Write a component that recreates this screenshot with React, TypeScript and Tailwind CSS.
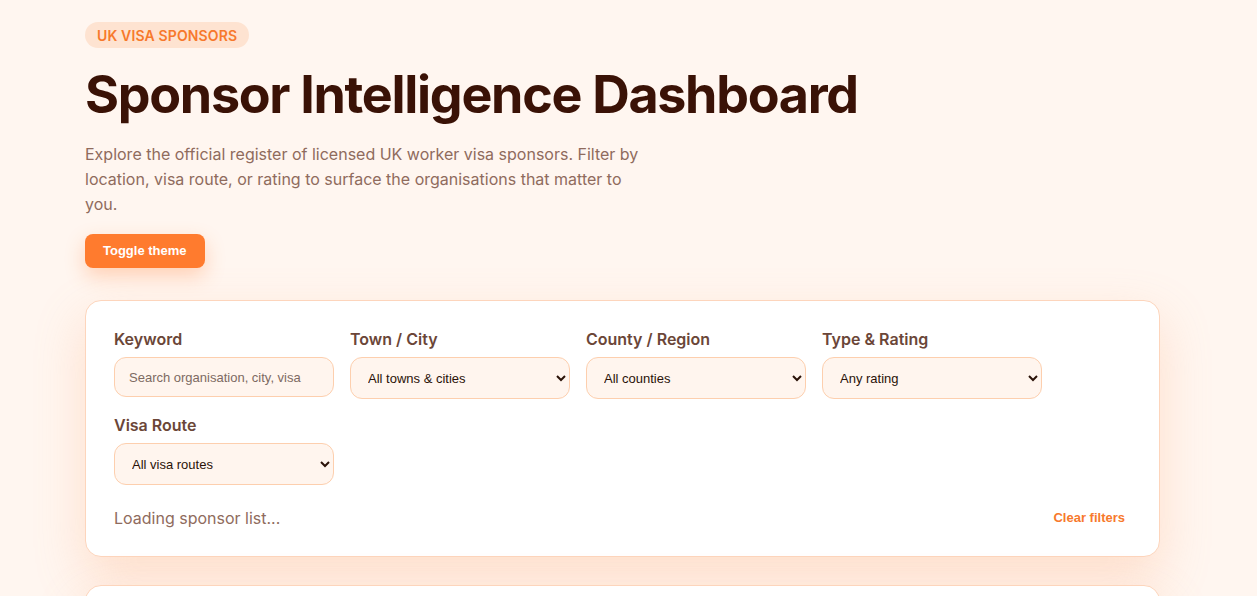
import { useState } from 'react'

const Field = ({ label, children }: { label: string; children: React.ReactNode }) => {
  return (
    <div className="flex w-[220px] flex-col gap-[8px]">
      <label className="font-['Inter',sans-serif] text-[16px] font-semibold leading-5 text-[#6b4638]">
        {label}
      </label>
      {children}
    </div>
  )
}

const selectClass =
  "h-[42px] w-full rounded-xl border border-[#fdcfae] bg-[#fff5ee] px-[13px] font-['Liberation_Sans',Arial,sans-serif] text-[13px] text-[#2a1208] outline-none"

export default function App() {
  const [keyword, setKeyword] = useState('')

  return (
    <div className="min-h-[596px] bg-[#fff6f0] font-['Inter',sans-serif]">
      <div className="ml-[85px] w-[1075px] pt-[22px]">
        <span className="inline-flex h-[26px] items-center rounded-full bg-[#fee3d1] px-3 text-[14px] font-semibold uppercase tracking-[0.01em] text-[#f7792c]">
          UK Visa Sponsors
        </span>
        <h1 className="mt-[15px] text-[52px] font-bold leading-[64px] tracking-[-0.025em] text-[#3a1206]">
          Sponsor Intelligence Dashboard
        </h1>
        <p className="mt-[15px] max-w-[570px] text-[16px] leading-[25px] text-[#8f6b5d]">
          Explore the official register of licensed UK worker visa sponsors. Filter by location, visa route, or rating to
          surface the organisations that matter to you.
        </p>
        <button className="mt-[17px] h-[34px] rounded-lg bg-[#ff7b2e] px-[18px] font-['Liberation_Sans',Arial,sans-serif] text-[13px] font-bold text-white shadow-[0_8px_20px_rgba(255,123,46,0.3)]">
          Toggle theme
        </button>

        <div className="mt-[32px] rounded-2xl border border-[#fdd5bc] bg-white px-[28px] pt-[28px] pb-[26px] shadow-[0_20px_50px_rgba(253,170,120,0.3)]">
          <div className="flex flex-wrap gap-4">
            <Field label="Keyword">
              <input
                value={keyword}
                onChange={(e) => setKeyword(e.target.value)}
                placeholder="Search organisation, city, visa"
                className="h-10 w-full rounded-xl border border-[#fdcfae] bg-[#fff5ee] px-[14px] font-['Liberation_Sans',Arial,sans-serif] text-[13px] text-[#2a1208] outline-none placeholder:text-[#7d6a62]"
              />
            </Field>
            <Field label="Town / City">
              <select className={selectClass}>
                <option>All towns &amp; cities</option>
              </select>
            </Field>
            <Field label="County / Region">
              <select className={selectClass}>
                <option>All counties</option>
              </select>
            </Field>
            <Field label="Type & Rating">
              <select className={selectClass}>
                <option>Any rating</option>
              </select>
            </Field>
            <Field label="Visa Route">
              <select className={selectClass}>
                <option>All visa routes</option>
              </select>
            </Field>
          </div>
          <div className="mt-[21px] flex items-center justify-between">
            <span className="text-[16px] leading-6 text-[#8f6b5d]">Loading sponsor list...</span>
            <button className="pr-[6px] font-['Liberation_Sans',Arial,sans-serif] text-[13px] font-bold text-[#f7792c]">
              Clear filters
            </button>
          </div>
        </div>

        <div className="mt-[28px] h-[60px] rounded-2xl border border-[#fdd5bc] bg-white shadow-[0_20px_50px_rgba(253,170,120,0.3)]" />
      </div>
    </div>
  )
}
